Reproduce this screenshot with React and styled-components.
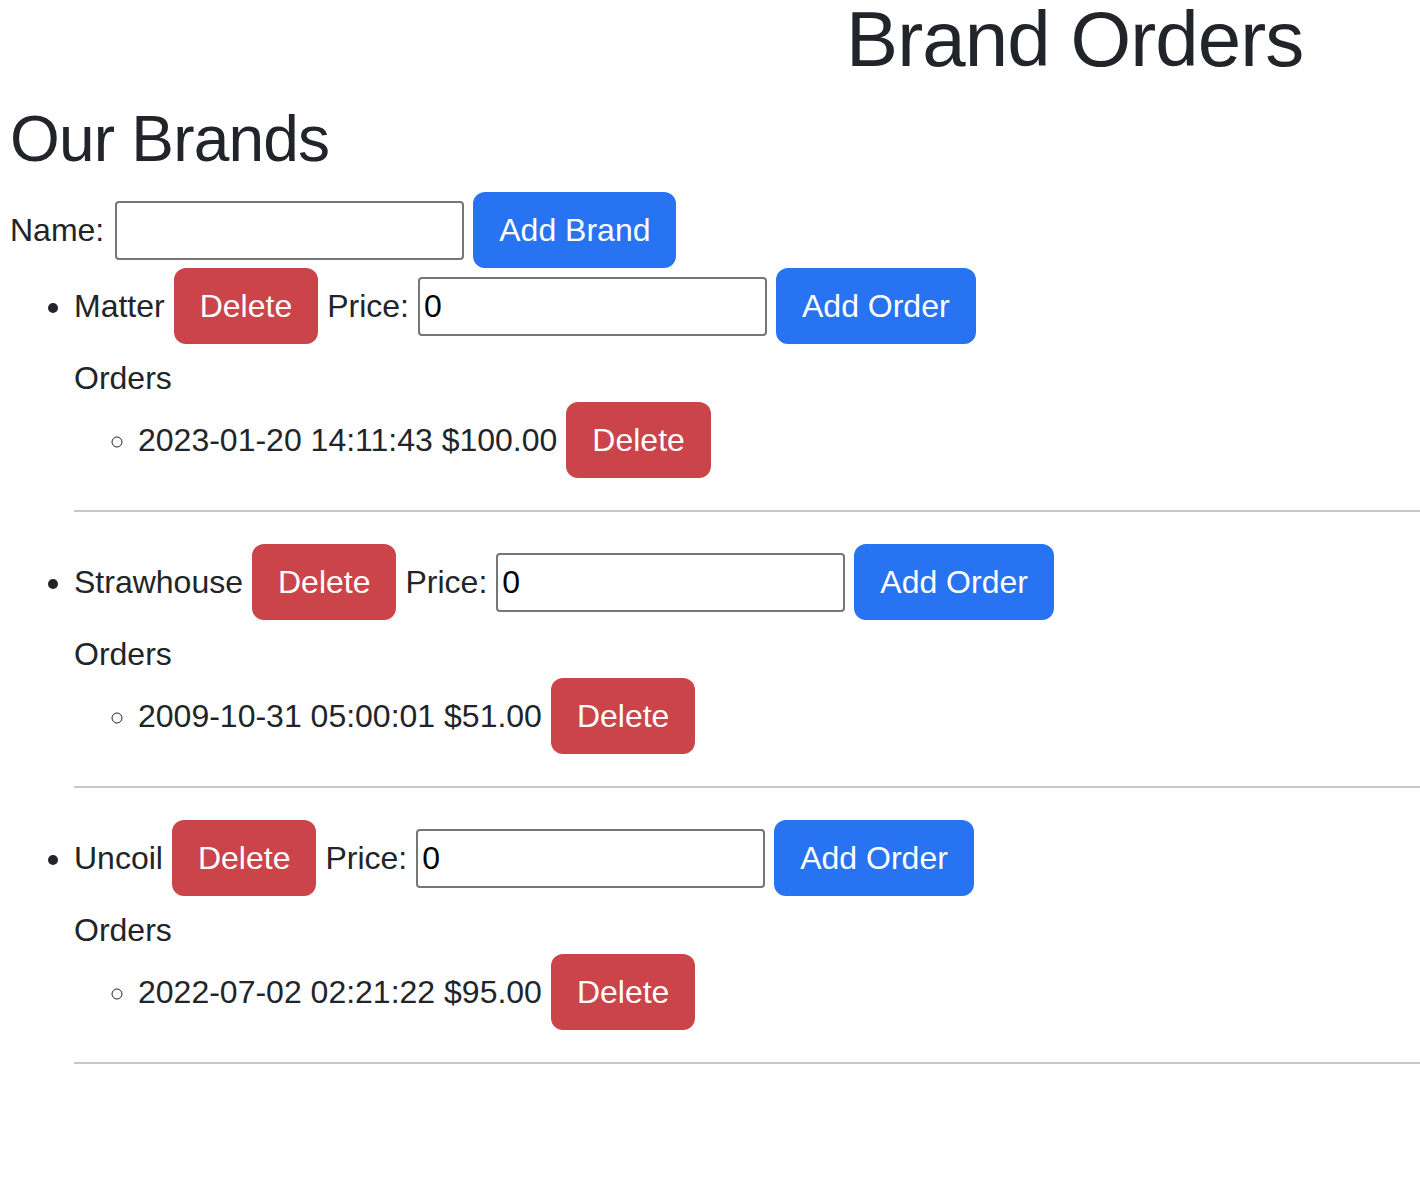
import React from 'react';
import styled, { createGlobalStyle } from 'styled-components';

const GlobalStyle = createGlobalStyle`
    body {
        margin: 0;
        font-family: "Liberation Sans", Arial, Helvetica, sans-serif;
        font-size: 32px;
        line-height: 1.5;
        color: #212529;
        background: #fff;
    }
`;

const Page = styled.div`
    padding-left: 10px;
`;

const Title = styled.h1`
    margin: 0 0 23px;
    padding-left: 836px;
    font-size: 78px;
    font-weight: 400;
    line-height: 78px;
    letter-spacing: -0.9px;
`;

const SectionTitle = styled.h2`
    margin: 0 0 14px;
    font-size: 64px;
    font-weight: 400;
    line-height: 1.2;
    letter-spacing: -0.8px;
`;

const Row = styled.div`
    display: flex;
    align-items: baseline;
    gap: 9px;
`;

const Label = styled.span`
    margin-right: ${(p) => (p.$wide ? '2px' : '0')};
`;

const Input = styled.input`
    box-sizing: border-box;
    width: 349px;
    height: 59px;
    padding: 2px 4px;
    border: 2px solid #767676;
    border-radius: 4px;
    font-family: "Liberation Sans", Arial, sans-serif;
    font-size: 32px;
    color: #000;
    background: #fff;
`;

const Button = styled.button`
    box-sizing: border-box;
    height: 76px;
    padding: 12px 24px;
    border: 2px solid transparent;
    border-radius: 12px;
    font-family: inherit;
    font-size: 32px;
    line-height: 1.5;
    color: #fff;
    background: ${(p) => (p.$danger ? '#cb444a' : '#2773f1')};
    cursor: pointer;
`;

const BrandList = styled.ul`
    margin: 0 0 32px;
    padding-left: 64px;
    list-style: disc;
`;

const OrderList = styled.ul`
    margin: 0;
    padding-left: 64px;
    list-style: circle;
`;

const OrdersLabel = styled.div`
    margin-top: 10px;
`;

const Divider = styled.hr`
    margin: 32px 0;
    border: 0;
    border-top: 2px solid #212529;
    opacity: 0.25;
`;

const brands = [
    { name: 'Matter', orders: [{ date: '2023-01-20 14:11:43', price: '$100.00' }] },
    { name: 'Strawhouse', orders: [{ date: '2009-10-31 05:00:01', price: '$51.00' }] },
    { name: 'Uncoil', orders: [{ date: '2022-07-02 02:21:22', price: '$95.00' }] },
];

export default function App() {
    return (
        <Page>
            <GlobalStyle />
            <Title>Brand Orders</Title>
            <SectionTitle>Our Brands</SectionTitle>
            <Row>
                <Label $wide>Name:</Label>
                <Input type="text" defaultValue="" />
                <Button>Add Brand</Button>
            </Row>
            <BrandList>
                {brands.map((brand) => (
                    <li key={brand.name}>
                        <Row>
                            <span>{brand.name}</span>
                            <Button $danger>Delete</Button>
                            <Label>Price:</Label>
                            <Input type="number" defaultValue="0" />
                            <Button>Add Order</Button>
                        </Row>
                        <OrdersLabel>Orders</OrdersLabel>
                        <OrderList>
                            {brand.orders.map((order) => (
                                <li key={order.date}>
                                    <Row>
                                        <span>{order.date} {order.price}</span>
                                        <Button $danger>Delete</Button>
                                    </Row>
                                </li>
                            ))}
                        </OrderList>
                        <Divider />
                    </li>
                ))}
            </BrandList>
        </Page>
    );
}
